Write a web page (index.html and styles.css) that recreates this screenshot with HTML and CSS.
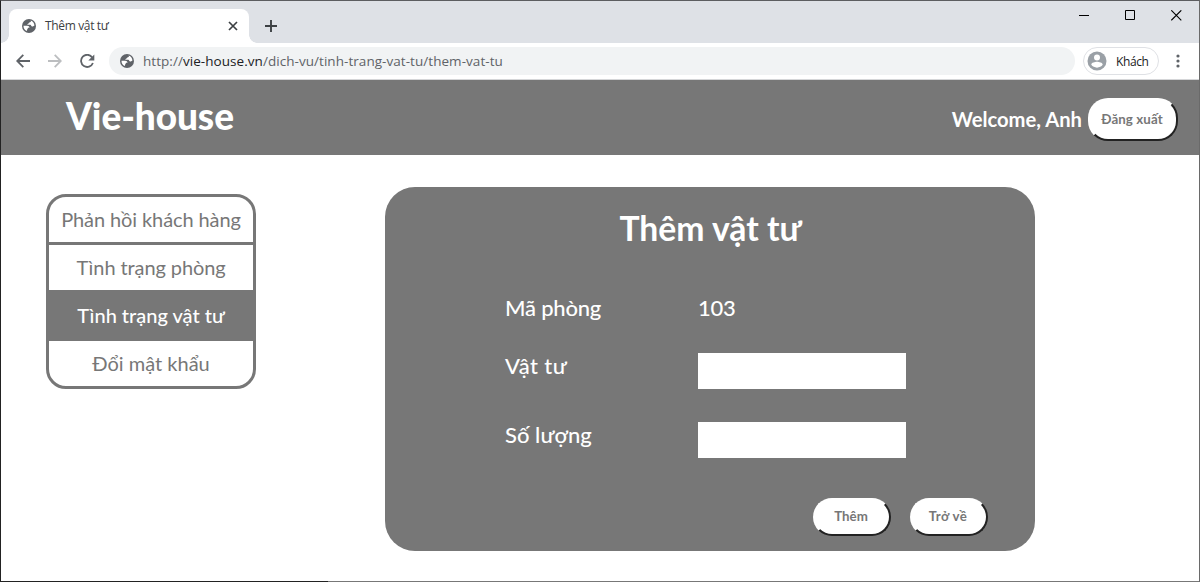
FILE: index.html
```html
<!DOCTYPE html>
<html lang="vi">
<head>
<meta charset="utf-8">
<title>Thêm vật tư</title>
<link rel="stylesheet" href="styles.css">
</head>
<body>
<svg class="defs" width="0" height="0">
  <symbol id="globe" viewBox="0 0 14 14">
    <circle cx="7" cy="7" r="7" fill="#5f6368"/>
    <path d="M8.600 1.600C9.500 2.700 8.300 3.500 7 3.700 6.600 4.900 5.300 4.600 5.200 5.800h3.100c.9 0 .9 1.800 1.900 1.800 1 0 1.200-.9 2.200-.8A5.500 5.500 0 0 0 8.600 1.600zM1.500 6.700h3.700c1.400 0 2.300.8 2.300 2.100H6c-.2 1.400-.9 1.200-1 2.500v.8A5.600 5.600 0 0 1 1.500 6.700z" fill="#fff"/>
  </symbol>
</svg>
<div class="window">
  <div class="tabstrip">
    <div class="tab">
      <svg class="favicon" width="14" height="14"><use href="#globe"/></svg>
      <span class="tab-title">Thêm vật tư</span>
      <svg class="tab-close" width="10" height="10" viewBox="0 0 10 10"><path d="M1 1l8 8M9 1L1 9" stroke="#3c4043" stroke-width="1.7"/></svg>
    </div>
    <svg class="new-tab" width="12" height="12" viewBox="0 0 12 12"><path d="M6 0v12M0 6h12" stroke="#3c4043" stroke-width="1.9"/></svg>
    <div class="window-buttons">
      <svg width="11" height="11" viewBox="0 0 11 11"><path d="M0 5.5h10" stroke="#000"/></svg>
      <svg width="11" height="11" viewBox="0 0 11 11"><path d="M.5 .5h9v9h-9z" fill="none" stroke="#000"/></svg>
      <svg width="11" height="11" viewBox="0 0 11 11"><path d="M.3 .3l10 10M10.300 .3l-10 10" stroke="#000" stroke-width="1.1"/></svg>
    </div>
  </div>
  <div class="toolbar">
    <svg class="nav back" width="14" height="14" viewBox="0 0 14 14"><path d="M14 7H1.500M7.300 .9L1.200 7l6.100 6.100" fill="none" stroke="#5f6368" stroke-width="1.8"/></svg>
    <svg class="nav forward" width="14" height="14" viewBox="0 0 14 14"><path d="M0 7h12.500M6.700 .9L12.800 7l-6.100 6.100" fill="none" stroke="#bcbec0" stroke-width="1.8"/></svg>
    <svg class="nav reload" width="15" height="14" viewBox="0 0 15 14"><path d="M12.200 3.400A6.100 6.100 0 1 0 12.900 9" fill="none" stroke="#5f6368" stroke-width="1.8"/><path d="M14.300 .4v6H8.300z" fill="#5f6368"/></svg>
    <div class="omnibox">
      <svg width="14" height="14"><use href="#globe"/></svg>
      <span class="url">http://<b>vie-house.vn</b>/dich-vu/tinh-trang-vat-tu/them-vat-tu</span>
    </div>
    <div class="profile">
      <svg width="20" height="20" viewBox="0 0 20 20"><circle cx="10" cy="10" r="9.500" fill="#9aa0a6"/><circle cx="10" cy="6.600" r="3" fill="#fff"/><path d="M4.300 13.700c0-2 3.800-2.900 5.700-2.900s5.700.9 5.700 2.900a7 7 0 0 1-11.400 0z" fill="#fff"/></svg>
      <span class="profile-name">Khách</span>
    </div>
    <svg class="more" width="4" height="14" viewBox="0 0 4 14"><g fill="#5f6368"><circle cx="2" cy="2" r="1.600"/><circle cx="2" cy="7" r="1.600"/><circle cx="2" cy="12" r="1.600"/></g></svg>
  </div>
  <header class="site-header">
    <h1 class="brand">Vie-house</h1>
    <span class="welcome">Welcome, Anh</span>
    <button class="btn logout">Đăng xuất</button>
  </header>
  <main class="content">
    <nav class="menu">
      <a class="menu-item">Phản hồi khách hàng</a>
      <a class="menu-item">Tình trạng phòng</a>
      <a class="menu-item active">Tình trạng vật tư</a>
      <a class="menu-item">Đổi mật khẩu</a>
    </nav>
    <section class="card">
      <h2 class="card-title">Thêm vật tư</h2>
      <form class="form">
        <span class="label">Mã phòng</span><span class="label">103</span>
        <label class="label item-label" for="item">Vật tư</label><input id="item" class="field">
        <label class="label" for="qty">Số lượng</label><input id="qty" class="field">
      </form>
      <div class="actions">
        <button class="btn small">Thêm</button>
        <button class="btn small return">Trở về</button>
      </div>
    </section>
  </main>
  <div class="bottom-edge"></div>
</div>
</body>
</html>
```
FILE: styles.css
```css
* { box-sizing: border-box; }
body { margin: 0; font-family: Lato, sans-serif; background: #fff; }
svg { display: block; flex: none; }
.defs { position: absolute; }
.window {
  width: 1200px;
  height: 582px;
  border-top: 1px solid #5c5d60;
  border-left: 1px solid #222;
  border-right: 1px solid #6a6a6a;
  display: flex;
  flex-direction: column;
  overflow: hidden;
}
.tabstrip {
  height: 42px;
  flex: none;
  background: #dee1e6;
  display: flex;
  align-items: flex-start;
}
.tab {
  position: relative;
  width: 240px;
  height: 34px;
  margin: 8px 0 0 8px;
  padding: 0 11px 0 13px;
  background: #fff;
  border-radius: 8px 8px 0 0;
  display: flex;
  align-items: center;
}
.tab::before, .tab::after {
  content: "";
  position: absolute;
  bottom: 0;
  width: 8px;
  height: 8px;
}
.tab::before { left: -8px; background: radial-gradient(circle at 0 0, #dee1e6 7.500px, #fff 8px); }
.tab::after { right: -8px; background: radial-gradient(circle at 100% 0, #dee1e6 7.500px, #fff 8px); }
.tab-title {
  flex: 1;
  margin: -2px 0 0 9px;
  font: 12px "Open Sans", sans-serif;
  letter-spacing: -0.350px;
  color: #3c4043;
}
.new-tab { margin: 19px 0 0 16px; }
.window-buttons { display: flex; gap: 35px; margin: 9px 17px 0 auto; }
.toolbar {
  height: 37px;
  flex: none;
  border-bottom: 1px solid #d5d6d8;
  display: flex;
  align-items: center;
  padding-left: 15px;
}
.forward { margin-left: 18px; }
.reload { margin-left: 18px; }
.omnibox {
  width: 966px;
  height: 28px;
  margin-left: 14px;
  padding-left: 11px;
  border-radius: 14px;
  background: #f1f3f4;
  display: flex;
  align-items: center;
}
.url {
  margin-left: 9px;
  font: 13.500px "Open Sans", sans-serif;
  letter-spacing: 0.050px;
  color: #5f6368;
  white-space: nowrap;
}
.url b { font-weight: 400; color: #202124; }
.profile {
  width: 76px;
  height: 28px;
  margin-left: 8px;
  padding-left: 3px;
  border: 1px solid #dfe1e5;
  border-radius: 14px;
  display: flex;
  align-items: center;
}
.profile-name { margin: 0 0 0 9px; font: 12px "Open Sans", sans-serif; letter-spacing: -0.400px; color: #202124; }
.more { margin-left: 17px; }
.site-header {
  height: 75px;
  flex: none;
  background: #777;
  color: #fff;
  display: flex;
  align-items: center;
  padding: 0 21px 0 65px;
}
.brand { margin: -3px auto 0 0; font-size: 37px; font-weight: 900; line-height: 44px; letter-spacing: -0.100px; }
.welcome { font-size: 20.200px; font-weight: 700; margin: 2px 6px 0 0; }
.btn {
  background: #fff;
  border: 2px solid;
  border-color: #fff #222 #222 #fff;
  border-radius: 20px;
  padding: 0;
  font: 700 13.300px Lato, sans-serif;
  color: #777;
}
.logout { width: 90px; height: 43px; margin-top: 3px; padding-right: 2px; letter-spacing: 0.100px; }
.content { flex: 1; display: flex; align-items: flex-start; }
.menu {
  width: 210px;
  margin: 39px 0 0 45px;
  border: 3px solid #777;
  border-radius: 20px;
  overflow: hidden;
}
.menu-item {
  display: block;
  height: 48px;
  line-height: 44px;
  border-bottom: 3px solid #777;
  text-align: center;
  font-size: 20px;
  letter-spacing: -0.100px;
  color: #777;
}
.menu-item:last-child { height: 45px; border-bottom: 0; letter-spacing: 0; }
.menu-item.active { background: #777; color: #fff; font-weight: 500; letter-spacing: 0; }
.card {
  width: 650px;
  height: 364px;
  margin: 32px 0 0 129px;
  padding: 20px 47px 15px 120px;
  border-radius: 30px;
  background: #777;
  color: #fff;
  display: flex;
  flex-direction: column;
}
.card-title {
  margin: 0 0 0 -72px;
  text-align: center;
  font-size: 33.700px;
  line-height: 42px;
  font-weight: 700;
}
.form {
  display: grid;
  grid-template-columns: 193px 208px;
  grid-template-rows: 58px 69px 36px;
  margin-top: 46px;
}
.label { margin-top: -1px; font-size: 22px; line-height: 27px; font-weight: 500; letter-spacing: -0.200px; }
.label[for] { letter-spacing: 0.050px; }
.item-label[for] { letter-spacing: 0.400px; }
.field { width: 208px; height: 36px; border: 0; padding: 0 8px; background: #fff; }
.actions { display: flex; justify-content: flex-end; gap: 19px; margin-top: auto; }
.small { width: 78px; height: 38px; padding: 0 2px 2px 0; }
.return { letter-spacing: 0.400px; }
.bottom-edge { height: 1px; flex: none; background: linear-gradient(90deg, #222 327px, #777 327px); }
```
